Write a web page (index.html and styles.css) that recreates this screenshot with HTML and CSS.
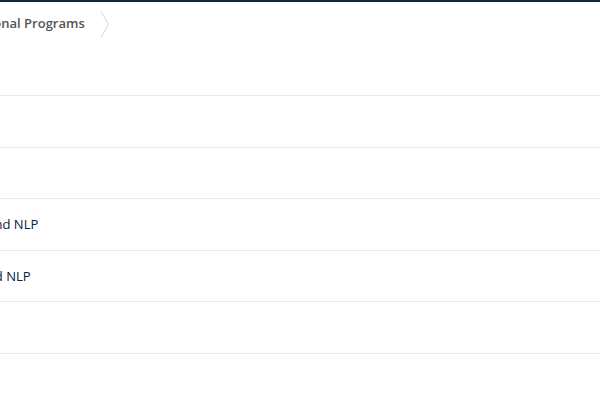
FILE: index.html
```html
<!DOCTYPE html>
<html lang="en">
<head>
  <meta charset="UTF-8">
  <meta name="viewport" content="width=device-width, initial-scale=1.0">
  <link rel="stylesheet" href="styles.css">
  <title>Programs</title>
</head>
<body>
  <div class="topbar"></div>

  <nav class="breadcrumb">
    <span class="crumb">Educational Programs</span>
    <span class="chevron">
      <svg width="10" height="27" viewBox="0 0 10 27">
        <polyline points="1,0.5 8.5,13.5 1,26.5" fill="none" stroke="#d6d6d6" stroke-width="1"/>
      </svg>
    </span>
  </nav>

  <ul class="list">
    <li class="row first"></li>
    <li class="row"></li>
    <li class="row"></li>
    <li class="row"><span class="label label-a">Machine Learning and NLP</span></li>
    <li class="row"><span class="label label-b">Deep Learning and NLP</span></li>
    <li class="row"></li>
    <li class="row last"></li>
  </ul>
</body>
</html>
```

FILE: styles.css
```css
body {
  margin: 0;
  font-family: "Open Sans", sans-serif;
  background: #fff;
  overflow: hidden;
}
.topbar {
  height: 2px;
  background-color: #16243f;
}
.breadcrumb {
  display: flex;
  align-items: center;
  height: 42px;
  overflow: hidden;
}
.crumb {
  font-size: 13px;
  font-weight: 600;
  color: #555;
  margin-left: -53px;
  white-space: nowrap;
}
.chevron {
  display: flex;
  margin-left: 15px;
  margin-top: 2px;
}
.list {
  list-style: none;
  margin: 0;
  padding: 0;
}
.row {
  height: 50.5px;
  border-bottom: 1px solid #e8e8e8;
  background: #fff;
  display: flex;
  align-items: center;
  overflow: hidden;
  font-size: 13px;
  color: #0a2240;
  white-space: nowrap;
}
.row.first {
  height: 51px;
}
.row.last {
  border-bottom: none;
}
.label-a {
  margin-left: -124px;
}
.label-b {
  margin-left: -112px;
}
```
